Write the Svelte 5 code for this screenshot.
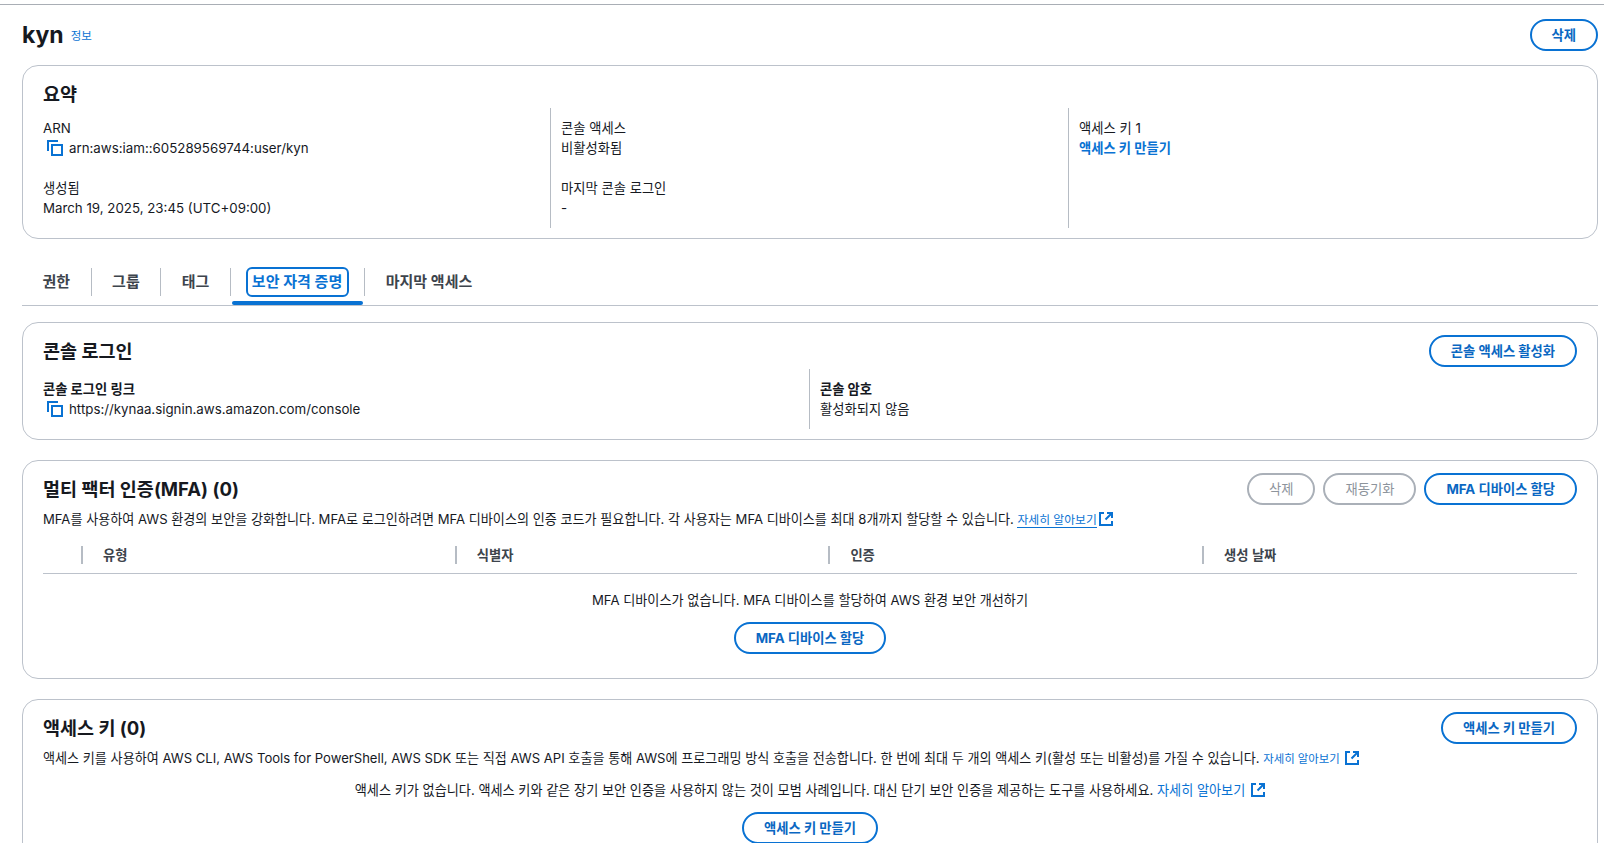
<script>
	const summary = [
		[
			{ label: 'ARN', value: 'arn:aws:iam::605289569744:user/kyn', copy: true },
			{ label: '생성됨', value: 'March 19, 2025, 23:45 (UTC+09:00)' }
		],
		[
			{ label: '콘솔 액세스', value: '비활성화됨' },
			{ label: '마지막 콘솔 로그인', value: '-' }
		],
		[{ label: '액세스 키 1', link: '액세스 키 만들기' }]
	];
	const tabs = ['권한', '그룹', '태그', '보안 자격 증명', '마지막 액세스'];
	const activeTab = '보안 자격 증명';
	const mfaColumns = ['유형', '식별자', '인증', '생성 날짜'];
</script>

{#snippet copyIcon()}
	<svg class="copy" width="16" height="16" viewBox="0 0 16 16" fill="none" stroke="#0972d3" stroke-width="2">
		<path d="M1 11V1h10" />
		<rect x="5" y="5" width="10" height="10" />
	</svg>
{/snippet}

{#snippet externalIcon()}
	<svg class="ext" width="14" height="14" viewBox="0 0 14 14" fill="none" stroke="#0972d3" stroke-width="2">
		<path d="M5 1H1v12h12V9" />
		<path d="M8 1h5v5M13 1L6.500 7.500" />
	</svg>
{/snippet}

<div class="page">
	<header class="head">
		<h1>kyn</h1>
		<a class="info" href="#info">정보</a>
		<button class="btn del">삭제</button>
	</header>

	<section class="card summary">
		<h2 class="small">요약</h2>
		<div class="cols">
			{#each summary as col}
				<div class="col">
					{#each col as item}
						<div class="item">
							<div>{item.label}</div>
							{#if item.link}
								<a class="strong" href="#key">{item.link}</a>
							{:else if item.copy}
								<div class="copyrow">{@render copyIcon()}<span>{item.value}</span></div>
							{:else}
								<div>{item.value}</div>
							{/if}
						</div>
					{/each}
				</div>
			{/each}
		</div>
	</section>

	<nav class="tabs">
		{#each tabs as tab}
			<div class="tab" class:active={tab === activeTab}><span>{tab}</span></div>
		{/each}
	</nav>

	<section class="card login">
		<div class="title-row">
			<h2>콘솔 로그인</h2>
			<button class="btn">콘솔 액세스 활성화</button>
		</div>
		<div class="login-cols">
			<div class="login-col">
				<div class="bold">콘솔 로그인 링크</div>
				<div class="copyrow">{@render copyIcon()}<span>https://kynaa.signin.aws.amazon.com/console</span></div>
			</div>
			<div class="login-col second">
				<div class="bold">콘솔 암호</div>
				<div>활성화되지 않음</div>
			</div>
		</div>
	</section>

	<section class="card mfa">
		<div class="title-row">
			<h2>멀티 팩터 인증(MFA) (0)</h2>
			<div class="actions">
				<button class="btn off">삭제</button>
				<button class="btn off">재동기화</button>
				<button class="btn">MFA 디바이스 할당</button>
			</div>
		</div>
		<p class="desc">
			MFA를 사용하여 AWS 환경의 보안을 강화합니다. MFA로 로그인하려면 MFA 디바이스의 인증 코드가 필요합니다. 각 사용자는 MFA 디바이스를 최대 8개까지 할당할 수 있습니다.
			<a class="more under" href="#more">자세히 알아보기</a>{@render externalIcon()}
		</p>
		<div class="thead">
			{#each mfaColumns as column}
				<div class="th">{column}</div>
			{/each}
		</div>
		<div class="empty">
			<div>MFA 디바이스가 없습니다. MFA 디바이스를 할당하여 AWS 환경 보안 개선하기</div>
			<button class="btn">MFA 디바이스 할당</button>
		</div>
	</section>

	<section class="card keys">
		<div class="title-row">
			<h2>액세스 키 (0)</h2>
			<button class="btn">액세스 키 만들기</button>
		</div>
		<p class="desc">
			액세스 키를 사용하여 AWS CLI, AWS Tools for PowerShell, AWS SDK 또는 직접 AWS API 호출을 통해 AWS에 프로그래밍 방식 호출을 전송합니다. 한 번에 최대 두 개의 액세스 키(활성 또는 비활성)를 가질 수 있습니다.
			<a class="more tiny" href="#more">자세히 알아보기</a>{@render externalIcon()}
		</p>
		<div class="empty keys-empty">
			<div>
				액세스 키가 없습니다. 액세스 키와 같은 장기 보안 인증을 사용하지 않는 것이 모범 사례입니다. 대신 단기 보안 인증을 제공하는 도구를 사용하세요.
				<a class="more big" href="#more">자세히 알아보기</a>{@render externalIcon()}
			</div>
			<button class="btn">액세스 키 만들기</button>
		</div>
	</section>
</div>

<style>
	:global(body) {
		background: #fff;
		overflow: hidden;
	}
	.page {
		box-sizing: border-box;
		overflow: hidden;
		margin-top: 4px;
		height: 839px;
		border-top: 1px solid #a9aeb5;
		padding: 0 6px 0 22px;
		font: 13.3px/20px 'Inter', 'Noto Sans CJK KR', sans-serif;
		color: #16191f;
	}
	h1,
	h2,
	p {
		margin: 0;
	}
	a {
		color: #0972d3;
		text-decoration: none;
	}
	.head {
		display: flex;
		align-items: center;
		height: 60px;
		padding-bottom: 1px;
		box-sizing: border-box;
	}
	h1 {
		font-size: 23px;
		line-height: 30px;
		font-weight: 700;
	}
	.info {
		font-size: 11.5px;
		margin: 3px 0 0 7px;
	}
	.del {
		margin-left: auto;
	}
	.btn {
		height: 32px;
		box-sizing: border-box;
		padding: 0 20px;
		border: 2px solid #0972d3;
		border-radius: 20px;
		background: #fff;
		color: #0a67c2;
		font: 700 13.3px/20px 'Inter', 'Noto Sans CJK KR', sans-serif;
		white-space: nowrap;
	}
	.btn.off {
		border-color: #aab0b8;
		color: #8d949c;
		font-weight: 400;
	}
	.card {
		border: 1px solid #bcc2cb;
		border-radius: 16px;
		padding: 0 20px;
		overflow: hidden;
	}
	h2 {
		font-size: 18.5px;
		line-height: 24px;
		font-weight: 700;
	}
	.summary {
		height: 174px;
		box-sizing: border-box;
		padding-top: 16px;
	}
	.cols {
		display: grid;
		grid-template-columns: 507px 518px 1fr;
		grid-template-rows: 120px;
		margin-top: 2px;
	}
	.col + .col {
		border-left: 1px solid #b6bcc4;
		padding-left: 10px;
	}
	.item {
		margin-top: 10px;
		height: 60px;
	}
	.item + .item {
		margin-top: 0;
		height: 50px;
	}
	.strong {
		font-weight: 700;
		display: block;
	}
	.copyrow {
		display: flex;
		align-items: center;
		padding-left: 4px;
		gap: 6px;
	}
	.copy {
		flex: none;
	}
	.tabs {
		display: flex;
		align-items: flex-start;
		height: 67px;
		box-sizing: border-box;
		border-bottom: 1px solid #bcc2cb;
	}
	.tab {
		position: relative;
		height: 28px;
		display: flex;
		align-items: center;
		padding: 0 20.5px;
		font-weight: 600;
		color: #3d444c;
		font-size: 15px;
		margin-top: 29px;
	}
	.tab + .tab {
		border-left: 1px solid #b6bcc4;
	}
	.tab.active {
		color: #0972d3;
		padding: 0 15px;
	}
	.tab.active span {
		border: 2px solid #0972d3;
		border-radius: 6px;
		padding: 2px 5px 2px 4px;
		line-height: 22px;
	}
	.tab.active::after {
		content: '';
		position: absolute;
		left: 1px;
		right: 1px;
		top: 33px;
		height: 4px;
		background: #0972d3;
		border-radius: 2px;
	}
	.login {
		height: 118px;
		box-sizing: border-box;
		margin-top: 16px;
	}
	.title-row {
		display: flex;
		align-items: center;
		justify-content: space-between;
		height: 32px;
		margin-top: 12px;
	}
	.actions {
		display: flex;
		gap: 8px;
	}
	.login-cols {
		display: grid;
		grid-template-columns: 766px 1fr;
		margin-top: 2px;
		height: 60px;
	}
	.login-col {
		padding-top: 10px;
	}
	.second {
		border-left: 1px solid #b6bcc4;
		padding-left: 10px;
	}
	.bold {
		font-weight: 700;
	}
	.mfa {
		height: 219px;
		box-sizing: border-box;
		margin-top: 20px;
	}
	.desc {
		margin-top: 4px;
		font-size: 13.1px;
	}
	.more {
		font-size: 11.8px;
	}
	.more.tiny {
		font-size: 11.4px;
	}
	.more.big {
		font-size: 13.15px;
	}
	.under {
		border-bottom: 1px solid #0972d3;
	}
	.ext {
		vertical-align: -2px;
		margin-left: 5px;
	}
	.under + .ext {
		margin-left: 2px;
	}
	.big + .ext {
		margin-left: 6px;
	}
	.thead {
		display: grid;
		grid-template-columns: repeat(4, 373.7px);
		margin-top: 16px;
		padding-left: 38px;
		height: 27px;
		border-bottom: 1px solid #bcc2cb;
	}
	.th {
		height: 18px;
		line-height: 18px;
		font-weight: 600;
		border-left: 2px solid #b6bcc4;
		padding-left: 20px;
		color: #3d444c;
	}
	.empty {
		text-align: center;
		display: flex;
		flex-direction: column;
		align-items: center;
		padding-top: 16px;
		gap: 12px;
		font-size: 13.15px;
	}
	.keys {
		height: 180px;
		box-sizing: border-box;
		margin-top: 20px;
	}
	.keys-empty {
		padding-top: 11px;
	}
</style>
